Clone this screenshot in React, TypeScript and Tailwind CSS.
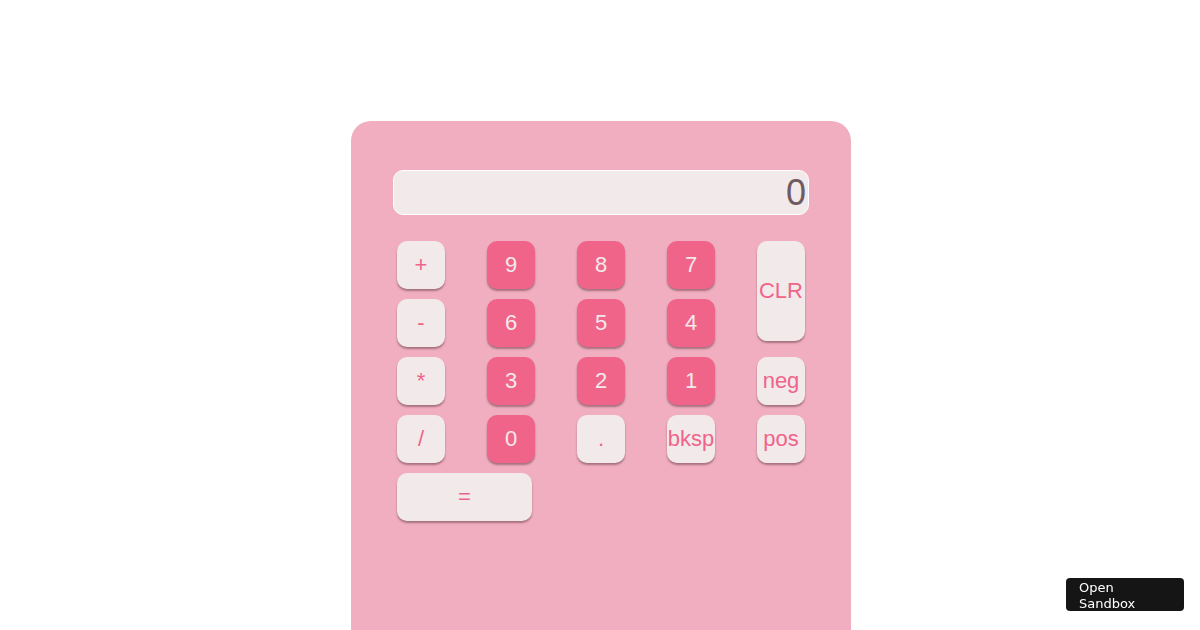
const light = "bg-[#f2e9eb] text-[#f06489]";
const pink = "bg-[#f06489] text-[#f2e9eb]";

type Key = { label: string; kind: "op" | "num"; size: string };

const std = "h-[48px] w-[48px]";

const keys: Key[] = [
  { label: "+", kind: "op", size: std },
  { label: "9", kind: "num", size: std },
  { label: "8", kind: "num", size: std },
  { label: "7", kind: "num", size: std },
  { label: "CLR", kind: "op", size: "row-span-2 h-[100px] w-[48px]" },
  { label: "-", kind: "op", size: std },
  { label: "6", kind: "num", size: std },
  { label: "5", kind: "num", size: std },
  { label: "4", kind: "num", size: std },
  { label: "*", kind: "op", size: std },
  { label: "3", kind: "num", size: std },
  { label: "2", kind: "num", size: std },
  { label: "1", kind: "num", size: std },
  { label: "neg", kind: "op", size: std },
  { label: "/", kind: "op", size: std },
  { label: "0", kind: "num", size: std },
  { label: ".", kind: "op", size: std },
  { label: "bksp", kind: "op", size: std },
  { label: "pos", kind: "op", size: std },
  { label: "=", kind: "op", size: "col-span-2 h-[48px] w-[135px]" },
];

const App = () => {
  return (
    <div className="min-h-[630px] bg-white flex justify-center pl-[2px] pt-[121px] font-[family-name:'Liberation_Sans',Arial,sans-serif]">
      <div className="w-[500px] h-[509px] bg-[#f0aec0] rounded-t-[20px] px-[42px] pt-[49px]">
        <div className="h-[45px] w-[416px] bg-[#f2e9eb] border border-white rounded-[10px] flex items-center justify-end pr-[2px] text-[36px] text-[#6e5a60]">
          0
        </div>
        <div className="mt-[26px] ml-[4px] grid grid-cols-[repeat(5,48px)] auto-rows-[48px] gap-x-[42px] gap-y-[10px] items-start">
          {keys.map((k) => (
            <button
              key={k.label}
              className={`${k.kind === "num" ? pink : light} ${k.size} pb-[2px] text-[22px] rounded-[10px] flex items-center justify-center font-[family-name:'Liberation_Sans',Arial,sans-serif] shadow-[0_2px_2px_rgba(80,40,50,0.45)]`}
            >
              {k.label}
            </button>
          ))}
        </div>
      </div>
      <div className="fixed right-[16px] bottom-[19px] w-[118px] h-[33px] bg-[#151515] rounded-[4px] px-[13px] pt-[2px] text-[13px] leading-[16px] text-white font-[family-name:'DejaVu_Sans',sans-serif]">
        Open
        <br />
        Sandbox
      </div>
    </div>
  );
};

export default App;
